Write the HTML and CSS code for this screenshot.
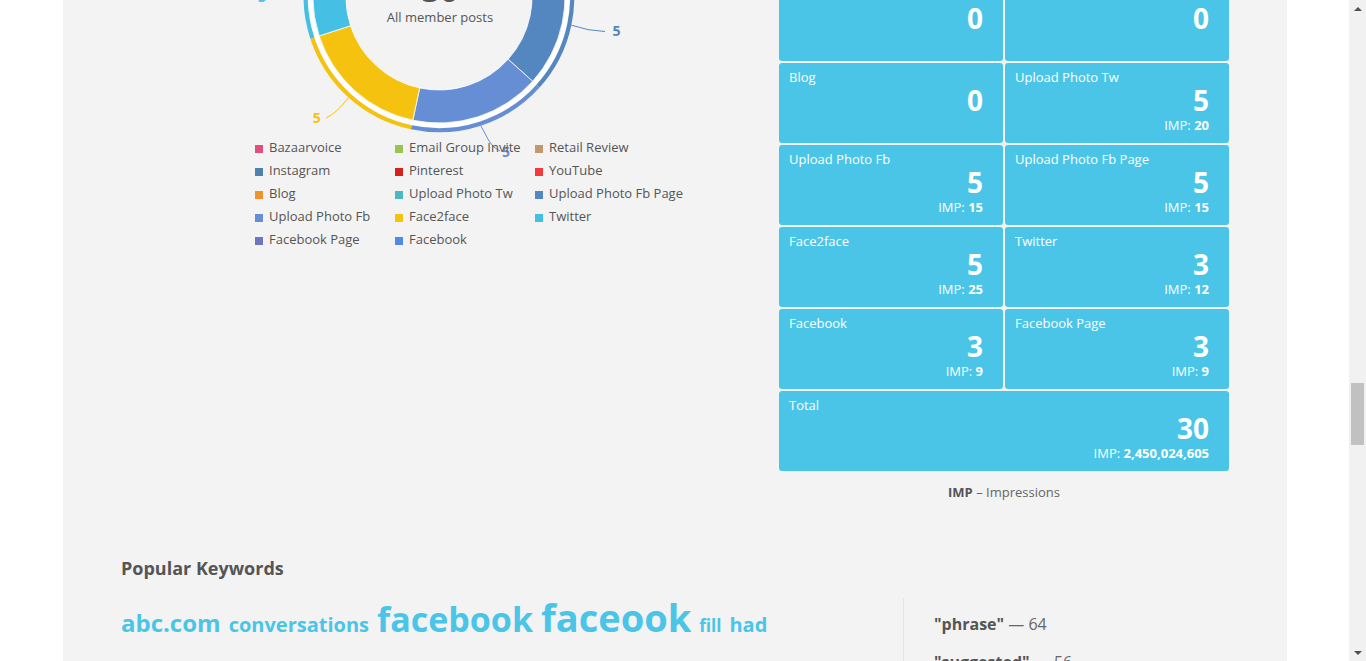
FILE: index.html
```html
<!DOCTYPE html>
<html lang="en">
<head>
<meta charset="utf-8">
<title>Member posts overview</title>
<link rel="stylesheet" href="styles.css">
</head>
<body>
<div class="screen">
  <div class="viewport">
    <main class="panel">
      <section class="overview">
        <div class="chart-col">
          <svg class="chart" width="658" height="136" viewBox="121 0 658 136" aria-label="All member posts chart">
            <circle cx="439" cy="-3" r="128.5" fill="none" stroke="#ffffff" stroke-width="5"/>
            <g stroke="#ffffff" stroke-width="0.8">
              <path fill="#5487c0" d="M 558.84 -41.93 A 126 126 0 0 1 532.63 81.31 L 508.11 59.23 A 93 93 0 0 0 527.45 -31.74 Z"/>
              <path fill="#658ed5" d="M 532.63 81.31 A 126 126 0 0 1 412.80 120.24 L 419.67 87.96 A 93 93 0 0 0 508.11 59.23 Z"/>
              <path fill="#f4c20f" d="M 412.80 120.24 A 126 126 0 0 1 319.16 35.93 L 350.55 25.74 A 93 93 0 0 0 419.67 87.96 Z"/>
              <path fill="#45c0e4" d="M 319.16 35.93 A 126 126 0 0 1 319.16 -41.93 L 350.55 -31.74 A 93 93 0 0 0 350.55 25.74 Z"/>
              <path fill="#4f8ae8" d="M 319.16 -41.93 A 126 126 0 0 1 364.94 -104.93 L 384.33 -78.24 A 93 93 0 0 0 350.55 -31.74 Z"/>
              <path fill="#6f75c0" d="M 364.94 -104.93 A 126 126 0 0 1 439 -129 L 439 -96 A 93 93 0 0 0 384.33 -78.24 Z"/>
              <path fill="#4cb9c0" d="M 439 -129 A 126 126 0 0 1 548.12 -66 L 519.54 -49.5 A 93 93 0 0 0 439 -96 Z"/>
              <path fill="#9bc34f" d="M 548.12 -66 A 126 126 0 0 1 558.84 -41.93 L 527.45 -31.74 A 93 93 0 0 0 519.54 -49.5 Z"/>
            </g>
            <g fill="none" stroke-width="4.2">
              <path stroke="#5487c0" d="M 565.69 -44.16 A 133.2 133.2 0 0 1 537.98 86.13"/>
              <path stroke="#658ed5" d="M 537.98 86.13 A 133.2 133.2 0 0 1 411.31 127.28"/>
              <path stroke="#f4c20f" d="M 411.31 127.28 A 133.2 133.2 0 0 1 312.31 38.16"/>
              <path stroke="#45c0e4" d="M 312.31 38.16 A 133.2 133.2 0 0 1 312.31 -44.16"/>
            </g>
            <g fill="none" stroke-width="1">
              <path stroke="#5487c0" d="M 571.5 25.2 Q 588 31 605 31.5"/>
              <path stroke="#658ed5" d="M 481 126 L 489 141 Q 493 148 500 151"/>
              <path stroke="#f4c20f" d="M 348.3 97.7 Q 337 113 326 118"/>
              <path stroke="#45c0e4" d="M 307 -3 Q 290 -6 272 -7"/>
            </g>
            <g class="chart-labels">
              <text x="616.5" y="36" fill="#5487c0">5</text>
              <text x="506" y="156.7" fill="#658ed5">5</text>
              <text x="316.7" y="123.3" fill="#f4c20f">5</text>
              <text x="262" y="2" fill="#45c0e4">3</text>
            </g>
            <text class="chart-total" x="440" y="2">30</text>
            <text class="chart-caption" x="440" y="21.7">All member posts</text>
          </svg>
          <ul class="legend">
            <li><span class="swatch c-bazaar"></span>Bazaarvoice</li>
            <li><span class="swatch c-email"></span>Email Group Invite</li>
            <li><span class="swatch c-retail"></span>Retail Review</li>
            <li><span class="swatch c-insta"></span>Instagram</li>
            <li><span class="swatch c-pin"></span>Pinterest</li>
            <li><span class="swatch c-yt"></span>YouTube</li>
            <li><span class="swatch c-blog"></span>Blog</li>
            <li><span class="swatch c-uptw"></span>Upload Photo Tw</li>
            <li><span class="swatch c-upfbp"></span>Upload Photo Fb Page</li>
            <li><span class="swatch c-upfb"></span>Upload Photo Fb</li>
            <li><span class="swatch c-f2f"></span>Face2face</li>
            <li><span class="swatch c-tw"></span>Twitter</li>
            <li><span class="swatch c-fbp"></span>Facebook Page</li>
            <li><span class="swatch c-fb"></span>Facebook</li>
          </ul>
        </div>
        <div class="stats-col">
          <div class="tiles">
            <div class="tile cut"><div class="tile-value">0</div></div>
            <div class="tile cut"><div class="tile-value">0</div></div>
            <div class="tile"><div class="tile-label">Blog</div><div class="tile-value">0</div></div>
            <div class="tile"><div class="tile-label">Upload Photo Tw</div><div class="tile-value">5</div><div class="tile-imp">IMP: <b>20</b></div></div>
            <div class="tile"><div class="tile-label">Upload Photo Fb</div><div class="tile-value">5</div><div class="tile-imp">IMP: <b>15</b></div></div>
            <div class="tile"><div class="tile-label">Upload Photo Fb Page</div><div class="tile-value">5</div><div class="tile-imp">IMP: <b>15</b></div></div>
            <div class="tile"><div class="tile-label">Face2face</div><div class="tile-value">5</div><div class="tile-imp">IMP: <b>25</b></div></div>
            <div class="tile"><div class="tile-label">Twitter</div><div class="tile-value">3</div><div class="tile-imp">IMP: <b>12</b></div></div>
            <div class="tile"><div class="tile-label">Facebook</div><div class="tile-value">3</div><div class="tile-imp">IMP: <b>9</b></div></div>
            <div class="tile"><div class="tile-label">Facebook Page</div><div class="tile-value">3</div><div class="tile-imp">IMP: <b>9</b></div></div>
            <div class="tile total"><div class="tile-label">Total</div><div class="tile-value">30</div><div class="tile-imp">IMP: <b>2,450,024,605</b></div></div>
          </div>
          <p class="imp-note"><b>IMP</b> – Impressions</p>
        </div>
      </section>

      <section class="keywords">
        <h3>Popular Keywords</h3>
        <div class="kw-body">
          <div class="cloud">
            <a class="s24">abc.com</a>
            <a class="s20">conversations</a>
            <a class="s34">facebook</a>
            <a class="s38">faceook</a>
            <a class="s17">fill</a>
            <a class="s20">had</a>
            <a class="s20">blog</a>
            <a class="s20">hashtag</a>
            <a class="s20">links</a>
            <a class="s20">photo</a>
            <a class="s20">shared</a>
            <a class="s20">tablet</a>
            <a class="s20">video</a>
          </div>
          <ul class="phrases">
            <li><b>"phrase"</b> — 64</li>
            <li><b>"suggested"</b> — 56</li>
          </ul>
        </div>
      </section>
    </main>
  </div>
  <div class="scrollbar" aria-hidden="true">
    <div class="sb-btn"><span class="arrow-up"></span></div>
    <div class="sb-track"><div class="sb-thumb"></div></div>
    <div class="sb-btn"><span class="arrow-down"></span></div>
  </div>
</div>
</body>
</html>
```

FILE: styles.css
```css
* { box-sizing: border-box; }

html, body {
  margin: 0;
  height: 661px;
  overflow: hidden;
}

body {
  font-family: "Open Sans", "Liberation Sans", sans-serif;
  color: #555555;
  background: #ffffff;
}

.screen {
  display: flex;
  height: 661px;
}

.viewport {
  flex: 1;
  overflow: hidden;
  background: #ffffff;
}

.panel {
  display: block;
  margin-left: 63px;
  width: 1224px;
  height: 661px;
  background: #f3f3f3;
  padding: 0 58px;
}

/* ---------- overview ---------- */
.overview {
  display: grid;
  grid-template-columns: 658px 450px;
}

.chart {
  display: block;
  overflow: visible;
  font-family: "Open Sans", "Liberation Sans", sans-serif;
}

.chart-labels text {
  font-size: 14px;
  font-weight: 700;
  text-anchor: middle;
}

.chart-total {
  font-size: 32px;
  font-weight: 700;
  fill: #555555;
  text-anchor: middle;
}

.chart-caption {
  font-size: 13px;
  fill: #555555;
  text-anchor: middle;
}

.legend {
  list-style: none;
  margin: 0;
  padding: 0 0 0 134px;
  display: grid;
  grid-template-columns: repeat(3, 140px);
}

.legend li {
  display: flex;
  align-items: center;
  height: 23px;
  font-size: 13px;
  line-height: 23px;
  white-space: nowrap;
  color: #555555;
}

.swatch {
  flex: none;
  width: 8px;
  height: 8px;
  margin: 2px 6px 0 0;
}

.c-bazaar { background: #df4f7a; }
.c-email { background: #9bc34f; }
.c-retail { background: #c09870; }
.c-insta { background: #5081aa; }
.c-pin { background: #d4211e; }
.c-yt { background: #f43a3f; }
.c-blog { background: #f0932f; }
.c-uptw { background: #4cb9c0; }
.c-upfbp { background: #5487c0; }
.c-upfb { background: #658ed5; }
.c-f2f { background: #f4c20f; }
.c-tw { background: #45c0e4; }
.c-fbp { background: #6f75c0; }
.c-fb { background: #4f8ae8; }

/* ---------- tiles ---------- */
.tiles {
  display: grid;
  grid-template-columns: 224px 224px;
  gap: 2px;
}

.tile {
  height: 80px;
  background: #4ac5e8;
  border-radius: 3px;
  color: #ffffff;
  padding: 5px 20px 0 10px;
  display: flex;
  flex-direction: column;
}

.tile.cut {
  height: 61px;
  padding-top: 4px;
  border-radius: 0 0 3px 3px;
}

.tile.total {
  grid-column: span 2;
}

.tile-label {
  font-size: 13px;
  line-height: 18px;
  white-space: nowrap;
}

.tile-value {
  font-size: 28px;
  line-height: 28px;
  font-weight: 700;
  text-align: right;
}

.tile-imp {
  font-size: 13px;
  line-height: 16px;
  margin-top: 3px;
  text-align: right;
}

.tile-imp b { font-weight: 700; }

.imp-note {
  margin: 11px 0 0;
  text-align: center;
  font-size: 13px;
  line-height: 20px;
  color: #666666;
}

.imp-note b {
  color: #555555;
  font-weight: 700;
}

/* ---------- keywords ---------- */
.keywords {
  margin-top: 54px;
}

.keywords h3 {
  margin: 0;
  font-size: 18px;
  line-height: 24px;
  font-weight: 700;
  color: #555555;
}

.kw-body {
  display: grid;
  grid-template-columns: 782px 1fr;
  margin-top: 18px;
}

.cloud {
  display: flex;
  flex-wrap: wrap;
  align-items: baseline;
  align-content: flex-start;
  column-gap: 8px;
  row-gap: 25px;
  padding-right: 100px;
}

.cloud a {
  color: #4ac5e8;
  font-weight: 700;
  line-height: 1;
  text-decoration: none;
  white-space: nowrap;
}

.s17 { font-size: 17px; }
.s20 { font-size: 20px; }
.s24 { font-size: 24px; }
.s34 { font-size: 34px; }
.s38 { font-size: 38px; }

.phrases {
  list-style: none;
  margin: 0;
  padding: 14px 0 0 30px;
  border-left: 1px solid #e4e4e4;
  min-height: 80px;
}

.phrases li {
  font-size: 16px;
  line-height: 24px;
  margin-bottom: 14px;
  color: #666666;
}

.phrases b {
  color: #555555;
  font-weight: 700;
}

/* ---------- scrollbar ---------- */
.scrollbar {
  flex: none;
  width: 17px;
  height: 661px;
  background: #f1f1f1;
  display: flex;
  flex-direction: column;
}

.sb-btn {
  flex: none;
  height: 17px;
  display: flex;
  align-items: center;
  justify-content: center;
}

.arrow-up {
  width: 0;
  height: 0;
  border-left: 4px solid transparent;
  border-right: 4px solid transparent;
  border-bottom: 4px solid #505050;
}

.arrow-down {
  width: 0;
  height: 0;
  border-left: 4px solid transparent;
  border-right: 4px solid transparent;
  border-top: 4px solid #505050;
}

.sb-track {
  flex: 1;
  padding-top: 366px;
}

.sb-thumb {
  margin-left: 2px;
  width: 13px;
  height: 62px;
  background: #c1c1c1;
}
```
